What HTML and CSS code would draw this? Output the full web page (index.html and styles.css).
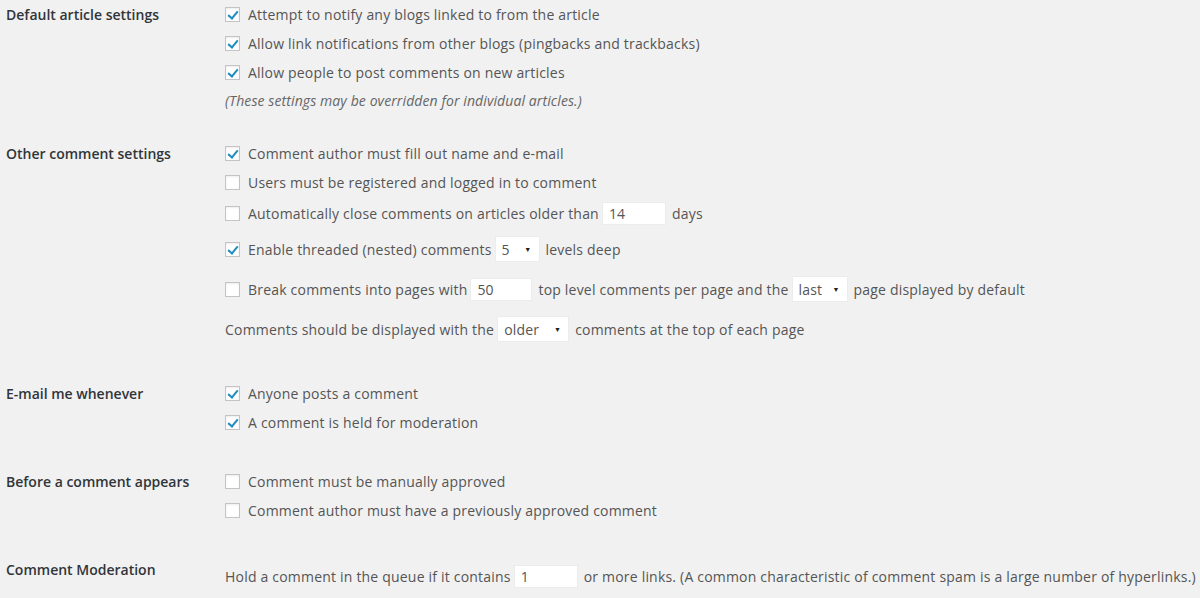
FILE: index.html
```html
<!DOCTYPE html>
<html>
<head>
<meta charset="utf-8">
<link rel="stylesheet" href="styles.css">
</head>
<body>
<div class="page">

  <section class="section first">
    <div class="label">Default article settings</div>
    <div class="fields">
      <div class="row"><span class="cb checked"></span><span>Attempt to notify any blogs linked to from the article</span></div>
      <div class="row"><span class="cb checked"></span><span>Allow link notifications from other blogs (pingbacks and trackbacks)</span></div>
      <div class="row"><span class="cb checked"></span><span>Allow people to post comments on new articles</span></div>
      <div class="row row-note"><span class="note">(These settings may be overridden for individual articles.)</span></div>
    </div>
  </section>

  <section class="section">
    <div class="label">Other comment settings</div>
    <div class="fields">
      <div class="row"><span class="cb checked"></span><span>Comment author must fill out name and e-mail</span></div>
      <div class="row"><span class="cb"></span><span>Users must be registered and logged in to comment</span></div>
      <div class="row row-sm"><span class="cb"></span><span>Automatically close comments on articles older than</span><input class="num w64" value="14"><span>days</span></div>
      <div class="row row-lg"><span class="cb checked"></span><span>Enable threaded (nested) comments</span><span class="select w45"><span>5</span><span class="arrow">▼</span></span><span>levels deep</span></div>
      <div class="row row-lg"><span class="cb"></span><span>Break comments into pages with</span><input class="num w62" value="50"><span>top level comments per page and the</span><span class="select w56"><span>last</span><span class="arrow">▼</span></span><span>page displayed by default</span></div>
      <div class="row row-lg"><span>Comments should be displayed with the</span><span class="select w72"><span>older</span><span class="arrow">▼</span></span><span>comments at the top of each page</span></div>
    </div>
  </section>

  <section class="section">
    <div class="label">E-mail me whenever</div>
    <div class="fields">
      <div class="row"><span class="cb checked"></span><span>Anyone posts a comment</span></div>
      <div class="row"><span class="cb checked"></span><span>A comment is held for moderation</span></div>
    </div>
  </section>

  <section class="section">
    <div class="label">Before a comment appears</div>
    <div class="fields">
      <div class="row"><span class="cb"></span><span>Comment must be manually approved</span></div>
      <div class="row"><span class="cb"></span><span>Comment author must have a previously approved comment</span></div>
    </div>
  </section>

  <section class="section last">
    <div class="label">Comment Moderation</div>
    <div class="fields">
      <div class="row row-xl"><span>Hold a comment in the queue if it contains</span><input class="num w64" value="1"><span>or more links. (A common characteristic of comment spam is a large number of hyperlinks.)</span></div>
    </div>
  </section>

</div>
</body>
</html>
```

FILE: styles.css
```css
html, body {
  margin: 0;
  padding: 0;
  background: #f1f1f1;
}
body {
  font-family: "Open Sans", "Noto Sans", sans-serif;
  font-size: 14px;
  letter-spacing: 0.2px;
  color: #555;
  width: 1200px;
  height: 598px;
  overflow: hidden;
}
.page {
  padding: 0 0 0 6px;
}
.section {
  display: grid;
  grid-template-columns: 219px 1fr;
  margin-bottom: 30px;
}
.section.first {
  margin-bottom: 25px;
}
.section.last {
  margin-bottom: 0;
}
.label {
  font-weight: 600;
  letter-spacing: 0;
  color: #30353a;
  line-height: 29px;
  height: 29px;
}
.fields {
  display: flex;
  flex-direction: column;
}
.row {
  display: flex;
  align-items: center;
  height: 29px;
  white-space: nowrap;
}
.row-note { height: 27px; }
.row-sm { height: 32px; }
.row-lg { height: 40px; }
.row-xl { height: 42px; }
.cb {
  box-sizing: border-box;
  width: 15px;
  height: 15px;
  border: 1px solid #c4c4c4;
  background: #fff;
  box-shadow: inset 0 1px 2px rgba(0,0,0,0.08);
  margin-right: 8px;
  position: relative;
  flex: none;
}
.cb.checked::after {
  content: "";
  position: absolute;
  left: 4px;
  top: 1px;
  width: 4px;
  height: 8px;
  border-right: 2px solid #1e8cbe;
  border-bottom: 2px solid #1e8cbe;
  transform: rotate(40deg);
}
.note {
  font-style: italic;
  font-size: 14px;
  letter-spacing: 0.1px;
  color: #666;
}
.num {
  box-sizing: border-box;
  height: 23px;
  border: 1px solid #ececec;
  background: #fff;
  font-family: inherit;
  font-size: 14px;
  color: #555;
  padding: 0 6px;
  margin: 0 6px 0 3px;
  outline: none;
}
.select {
  box-sizing: border-box;
  height: 26px;
  display: inline-flex;
  align-items: center;
  justify-content: space-between;
  background: #fff;
  border: 1px solid #ececec;
  padding: 0 7px 0 6px;
  margin: 0 6px 0 3px;
  color: #555;
}
.arrow {
  font-size: 7px;
  color: #222;
}
.w45 { width: 45px; }
.w56 { width: 56px; }
.w62 { width: 62px; }
.w64 { width: 64px; }
.w72 { width: 72px; }
```
